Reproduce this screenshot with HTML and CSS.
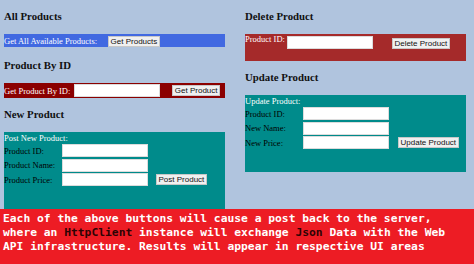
FILE: index.html
```html
<!DOCTYPE html>
<html>
<head>
<meta charset="utf-8">
<link rel="stylesheet" href="styles.css">
</head>
<body>
<div class="cols">
  <div class="col">
    <h3 class="head">All Products</h3>
    <div class="bar bar-blue"><span class="bar-label">Get All Available Products:</span><button class="btn btn-getall">Get Products</button></div>
    <h3 class="head">Product By ID</h3>
    <div class="bar bar-darkred"><span class="bar-label">Get Product By ID:</span><input class="field field-byid" type="text"><button class="btn btn-byid">Get Product</button></div>
    <h3 class="head">New Product</h3>
    <div class="panel">
      <div class="panel-title">Post New Product:</div>
      <div class="form">
        <span class="lbl">Product ID:</span><input class="field" type="text"><span></span>
        <span class="lbl">Product Name:</span><input class="field" type="text"><span></span>
        <span class="lbl">Product Price:</span><input class="field" type="text"><button class="btn btn-form">Post Product</button>
      </div>
    </div>
  </div>
  <div class="col">
    <h3 class="head">Delete Product</h3>
    <div class="bar bar-brown"><span class="bar-label">Product ID:</span><input class="field field-del" type="text"><button class="btn btn-del">Delete Product</button></div>
    <h3 class="head head-update">Update Product</h3>
    <div class="panel">
      <div class="panel-title">Update Product:</div>
      <div class="form">
        <span class="lbl">Product ID:</span><input class="field" type="text"><span></span>
        <span class="lbl">New Name:</span><input class="field" type="text"><span></span>
        <span class="lbl">New Price:</span><input class="field" type="text"><button class="btn btn-form btn-upd">Update Product</button>
      </div>
    </div>
  </div>
</div>
<div class="caption">Each of the above buttons will cause a post back to the server,<br>where an <span class="hl">HttpClient</span> instance will exchange <span class="hl">Json</span> Data with the Web<br>API infrastructure. Results will appear in respective UI areas</div>
</body>
</html>
```

FILE: styles.css
```css
html, body {
  margin: 0;
  padding: 0;
}
body {
  background: #b0c4de;
  font-family: "Liberation Serif", "Times New Roman", serif;
  font-size: 8.5px;
  color: #000;
  width: 474px;
  height: 264px;
  overflow: hidden;
}
.cols {
  display: flex;
  gap: 20px;
  padding: 10px 0 0 4px;
  align-items: flex-start;
}
.col {
  width: 221px;
  display: flex;
  flex-direction: column;
}
.head {
  margin: 0 0 11px 0;
  font-size: 10.8px;
  line-height: 13px;
  font-weight: bold;
  color: #111;
}
.bar {
  display: flex;
  align-items: center;
  color: #fff;
  margin-bottom: 12px;
}
.bar-label {
  white-space: nowrap;
}
.bar-blue {
  background: #4169e1;
  height: 13px;
}
.bar-darkred {
  background: #8b0000;
  height: 15px;
  margin-bottom: 10px;
}
.bar-brown {
  background: #a52a2a;
  height: 27px;
  align-items: flex-start;
  margin-bottom: 10px;
}
.field {
  width: 86px;
  height: 13px;
  box-sizing: border-box;
  border: 1px solid #dcdcdc;
  background: #fff;
  padding: 0;
  margin: 0;
  font-size: 8px;
}
.btn {
  font-family: "Liberation Sans", Arial, sans-serif;
  font-size: 8px;
  line-height: 9px;
  height: 11px;
  padding: 0 1.5px;
  margin: 0;
  background: #f0f0f0;
  border: 1px solid #c8c8c8;
  border-radius: 0;
  color: #111;
  box-sizing: border-box;
  white-space: nowrap;
}
.btn-getall {
  margin-left: 11px;
  margin-top: 2px;
}
.field-byid {
  margin-left: 4px;
}
.btn-byid {
  margin-left: 12px;
}
.field-del {
  margin-left: 2px;
  margin-top: 2px;
}
.btn-del {
  margin-left: 19px;
  margin-top: 4px;
}
.panel {
  background: #008b8b;
  padding-bottom: 23px;
}
.panel-title {
  color: #fff;
  line-height: 12px;
}
.form {
  display: grid;
  grid-template-columns: 58px 86px auto;
  row-gap: 1.5px;
  align-items: center;
}
.lbl {
  white-space: nowrap;
}
.btn-form {
  justify-self: start;
  margin-left: 8px;
}
.btn-upd {
  margin-left: 9px;
}
.caption {
  background: #ed1c24;
  color: #fff;
  font-family: "DejaVu Sans Mono", "Liberation Mono", monospace;
  font-weight: bold;
  font-size: 11.3px;
  line-height: 14px;
  padding: 3px 3px 10px 3px;
  white-space: nowrap;
}
.hl {
  color: #2d0404;
}
```
